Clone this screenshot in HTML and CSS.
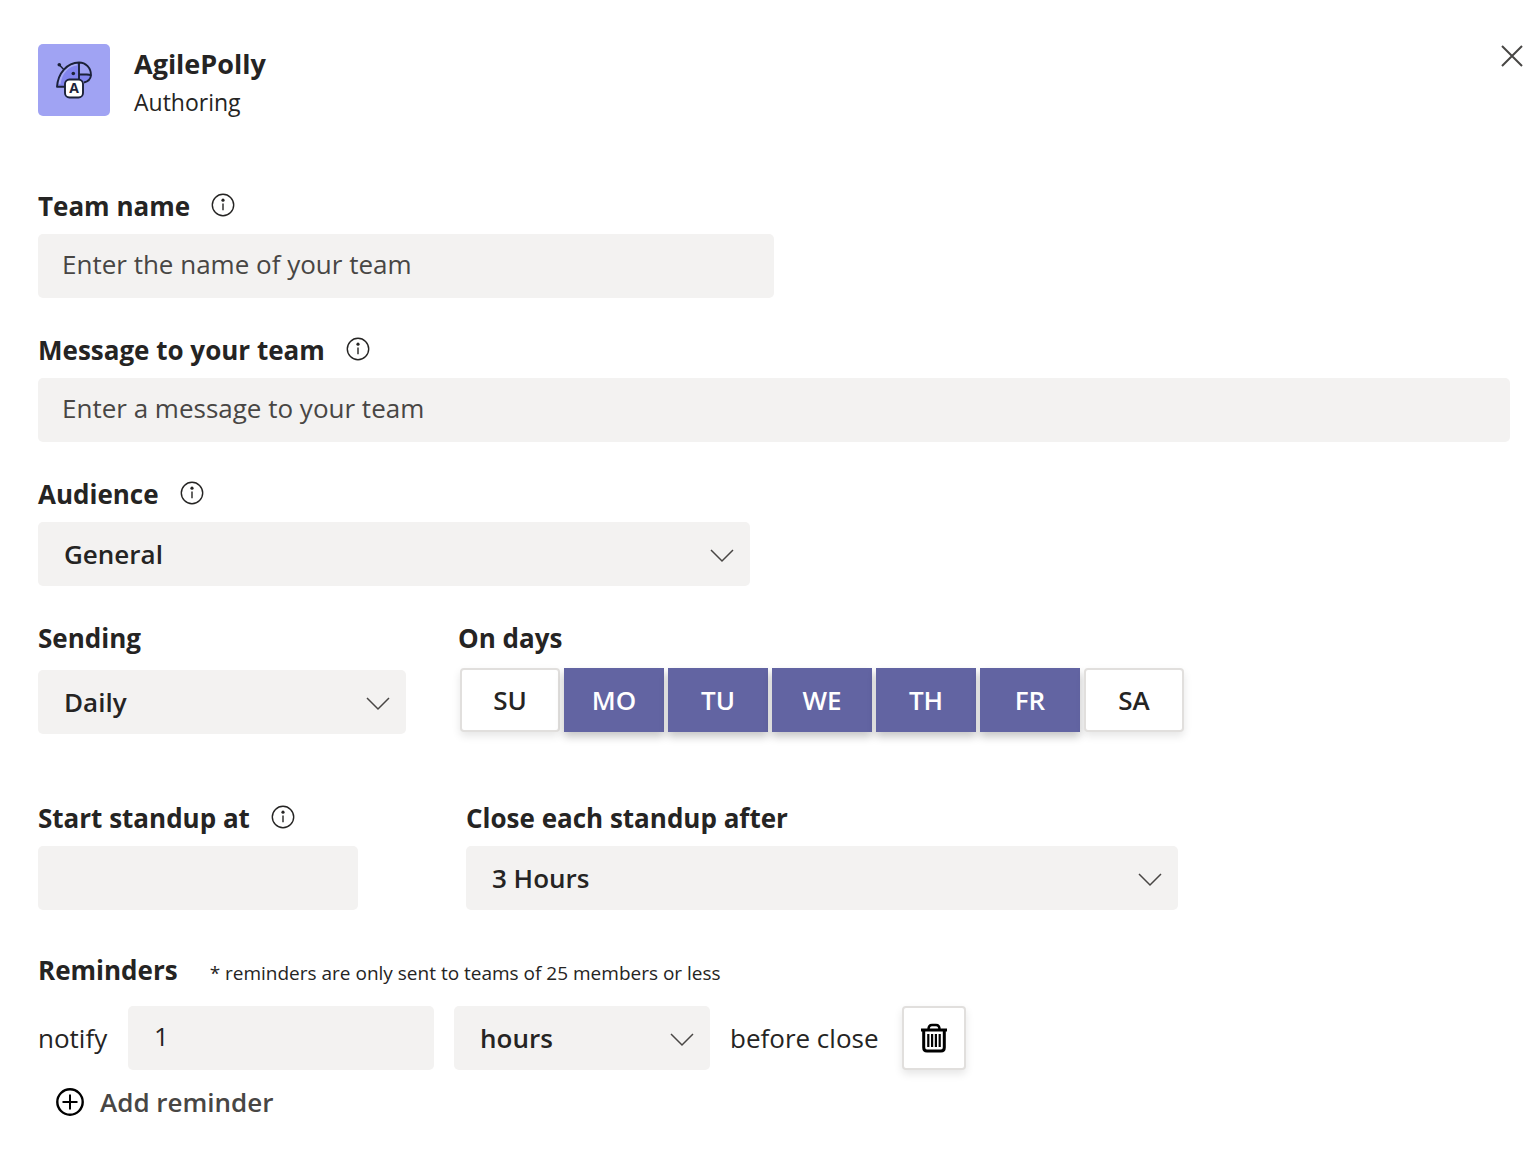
FILE: index.html
```html
<!DOCTYPE html>
<html lang="en">
<head>
    <meta charset="UTF-8">
    <meta name="viewport" content="width=device-width, initial-scale=1.0">
    <title>AgilePolly</title>
    <link rel="stylesheet" href="styles.css">
</head>
<body>

<!-- shared icons -->
<svg class="sprite" aria-hidden="true">
    <symbol id="info" viewBox="0 0 24 24">
        <circle cx="12" cy="12" r="10.7" fill="none" stroke="currentColor" stroke-width="1.4"/>
        <circle cx="12" cy="7.2" r="1.6" fill="currentColor"/>
        <path d="M12 10.5v6.7" stroke="currentColor" stroke-width="1.4"/>
    </symbol>
    <symbol id="chevron" viewBox="0 0 24 14">
        <path d="M1 1l11 11L23 1" fill="none" stroke="currentColor" stroke-width="1.5"/>
    </symbol>
</svg>

<header class="header">
    <svg class="logo" viewBox="0 0 72 72" aria-hidden="true">
        <rect width="72" height="72" rx="5" fill="#a0a3f3"/>
        <path d="M19 42.5C20 29 29 19 41 18.5V36L27 42.5Z" fill="#8285ee"/>
        <path d="M41 30.5H53C52.5 35 50 37.500 46 38.500L41 35Z" fill="#8285ee"/>
        <path d="M21.500 40C23 28 31 21 39 20.500" fill="none" stroke="#a9acf5" stroke-width="2"/>
        <path d="M27 42.7H19C20 29 29 18.8 41 18.5C48 18.5 53 24 53 31.3C50.5 30.3 48 30.3 41 30.3M41 18.5V35M53 31.3C52.500 35 50 37.500 46 38.500" fill="none" stroke="#1b2138" stroke-width="1.9" stroke-linejoin="round"/>
        <path d="M21.5 21L25.5 25.3" stroke="#1b2138" stroke-width="1.5"/>
        <circle cx="21.3" cy="20.7" r="1.8" fill="#1b2138"/>
        <circle cx="35.3" cy="29.5" r="1.8" fill="#1b2138"/>
        <rect x="27" y="35.5" width="18" height="18" rx="4.5" fill="#fff" stroke="#1b2138" stroke-width="1.9"/>
        <text x="36" y="49" class="logo-letter">A</text>
    </svg>
    <div class="heading">
        <h1>AgilePolly</h1>
        <p>Authoring</p>
    </div>
    <button type="button" class="close-btn" aria-label="Close">
        <svg width="22" height="22" viewBox="0 0 22 22"><path d="M1 1l20 20M21 1L1 21" stroke="currentColor" stroke-width="2"/></svg>
    </button>
</header>

<form class="form">
    <div class="group">
        <div class="label-row">
            <label for="team">Team name</label>
            <svg class="info"><use href="#info"/></svg>
        </div>
        <input class="field half" id="team" type="text" placeholder="Enter the name of your team">
    </div>

    <div class="group">
        <div class="label-row">
            <label for="message">Message to your team</label>
            <svg class="info"><use href="#info"/></svg>
        </div>
        <input class="field" id="message" type="text" placeholder="Enter a message to your team">
    </div>

    <div class="group">
        <div class="label-row">
            <label for="audience">Audience</label>
            <svg class="info"><use href="#info"/></svg>
        </div>
        <div class="select wide">
            <select class="field" id="audience"><option>General</option></select>
            <svg class="chevron"><use href="#chevron"/></svg>
        </div>
    </div>

    <div class="columns schedule">
        <div class="group sending">
            <div class="label-row"><label for="sending">Sending</label></div>
            <div class="select">
                <select class="field" id="sending"><option>Daily</option></select>
                <svg class="chevron"><use href="#chevron"/></svg>
            </div>
        </div>
        <div class="group">
            <div class="label-row" id="days-label">On days</div>
            <div class="days" role="group" aria-labelledby="days-label">
                <button type="button" class="day">SU</button>
                <button type="button" class="day selected">MO</button>
                <button type="button" class="day selected">TU</button>
                <button type="button" class="day selected">WE</button>
                <button type="button" class="day selected">TH</button>
                <button type="button" class="day selected">FR</button>
                <button type="button" class="day">SA</button>
            </div>
        </div>
    </div>

    <div class="columns timing">
        <div class="group start">
            <div class="label-row">
                <label for="start">Start standup at</label>
                <svg class="info"><use href="#info"/></svg>
            </div>
            <input class="field" id="start" type="text">
        </div>
        <div class="group wide">
            <div class="label-row"><label for="close-after">Close each standup after</label></div>
            <div class="select">
                <select class="field" id="close-after"><option>3 Hours</option></select>
                <svg class="chevron"><use href="#chevron"/></svg>
            </div>
        </div>
    </div>

    <div class="reminders">
        <div class="label-row">Reminders <small>* reminders are only sent to teams of 25 members or less</small></div>
        <div class="reminder">
            <label class="notify" for="amount">notify</label>
            <input class="field amount" id="amount" type="text" value="1">
            <div class="select unit">
                <select class="field" id="unit" aria-label="Unit"><option>hours</option></select>
                <svg class="chevron"><use href="#chevron"/></svg>
            </div>
            <label class="before" for="unit">before close</label>
            <button type="button" class="delete-btn" aria-label="Delete reminder">
                <svg width="28" height="30" viewBox="0 0 28 30" fill="none" stroke="#000">
                    <path d="M1 7h26" stroke-width="3"/>
                    <path d="M8.5 6.5C8.5 3 10 2 12 2h4c2 0 3.5 1 3.5 4.5" stroke-width="2.5"/>
                    <path d="M3.7 8v16.500Q3.7 28 7 28h14Q24.300 28 24.300 24.500V8" stroke-width="3"/>
                    <path d="M8.300 11v13M12.100 11v13M15.900 11v13M19.700 11v13" stroke-width="2.200"/>
                </svg>
            </button>
        </div>
        <button type="button" class="add-btn">
            <svg width="28" height="28" viewBox="0 0 28 28" fill="none" stroke="#000">
                <circle cx="14" cy="14" r="12.7" stroke-width="2.4"/>
                <path d="M14 6.5v15M6.5 14h15" stroke-width="2"/>
            </svg>
            Add reminder
        </button>
    </div>
</form>

</body>
</html>
```
FILE: styles.css
```css
* {
    box-sizing: border-box;
}
body {
    margin: 0;
    padding: 44px 26px 28px 38px;
    background: #fff;
    color: #252423;
    font-family: "Open Sans", "Noto Sans", sans-serif;
    font-size: 26px;
    line-height: 40px;
}
h1, p {
    margin: 0;
}
button, input, select {
    font: inherit;
    color: inherit;
}
button {
    cursor: pointer;
}
.sprite {
    display: none;
}

/* header */
.header {
    display: flex;
    align-items: flex-start;
    gap: 24px;
    margin-bottom: 66px;
}
.logo {
    width: 72px;
    height: 72px;
}
.logo-letter {
    fill: #1b2138;
    font-size: 14px;
    font-weight: 700;
    text-anchor: middle;
}
.heading {
    flex: 1;
}
.heading h1 {
    font-size: 27px;
    font-weight: 700;
    line-height: 40px;
}
.heading p {
    font-size: 23px;
    line-height: 36px;
}
.close-btn {
    display: flex;
    margin-right: -14px;
    padding: 1px;
    border: none;
    background: none;
    color: #484644;
}

/* fields */
.form {
    display: flex;
    flex-direction: column;
    gap: 32px;
}
.label-row {
    display: flex;
    align-items: center;
    gap: 21px;
    margin-bottom: 8px;
    font-weight: 700;
}
.info {
    width: 24px;
    height: 24px;
    margin-bottom: 2px;
}
.field {
    display: block;
    width: 100%;
    height: 64px;
    padding: 0 24px 4px;
    border: none;
    border-radius: 5px;
    background: #f3f2f1;
}
.field::placeholder {
    color: #484644;
    opacity: 1;
}
.half {
    width: 50%;
}
.wide {
    width: 712px;
    max-width: 100%;
}
.select {
    display: grid;
    align-items: center;
}
.select .field {
    grid-area: 1 / 1;
    padding: 0 56px 0 26px;
    appearance: none;
    font-weight: 600;
}
.chevron {
    grid-area: 1 / 1;
    justify-self: end;
    width: 24px;
    height: 14px;
    margin: 4px 16px 0 0;
    color: #484644;
    pointer-events: none;
}

/* schedule */
.columns {
    display: flex;
}
.schedule {
    gap: 52px;
    margin-bottom: 32px;
}
.schedule .label-row {
    margin-bottom: 12px;
}
.sending {
    width: 25%;
}
.days {
    display: flex;
    gap: 4px;
    margin: -2px 2px 0;
}
.day {
    width: 100px;
    height: 64px;
    padding: 0;
    border: 2px solid #e1dfdd;
    border-radius: 4px;
    background: #fff;
    box-shadow: 0 4px 8px rgba(0, 0, 0, 0.1);
    font-weight: 600;
}
.day.selected {
    border: none;
    border-radius: 0;
    background: #6264a2;
    box-shadow: 0 5px 8px rgba(0, 0, 0, 0.22);
    color: #fff;
}
.timing {
    gap: 108px;
}
.start {
    width: 320px;
}

/* reminders */
.reminders {
    margin-top: 8px;
}
.reminders .label-row {
    align-items: baseline;
    gap: 32px;
    margin-bottom: 16px;
}
.reminders small {
    font-size: 19px;
    font-weight: 400;
    line-height: 24px;
}
.reminder {
    display: flex;
    align-items: center;
    gap: 20px;
}
.notify {
    width: 70px;
}
.amount {
    width: 306px;
    padding-left: 26px;
}
.unit {
    width: 256px;
}
.before {
    width: 152px;
    white-space: nowrap;
}
.delete-btn {
    display: flex;
    align-items: center;
    justify-content: center;
    width: 64px;
    height: 64px;
    padding: 0;
    border: 2px solid #e1dfdd;
    border-radius: 4px;
    background: #fff;
    box-shadow: 0 4px 8px rgba(0, 0, 0, 0.1);
}
.add-btn {
    display: flex;
    align-items: center;
    gap: 16px;
    margin-top: 12px;
    padding: 0 18px;
    border: none;
    background: none;
    color: #484644;
    font-weight: 600;
}
```
